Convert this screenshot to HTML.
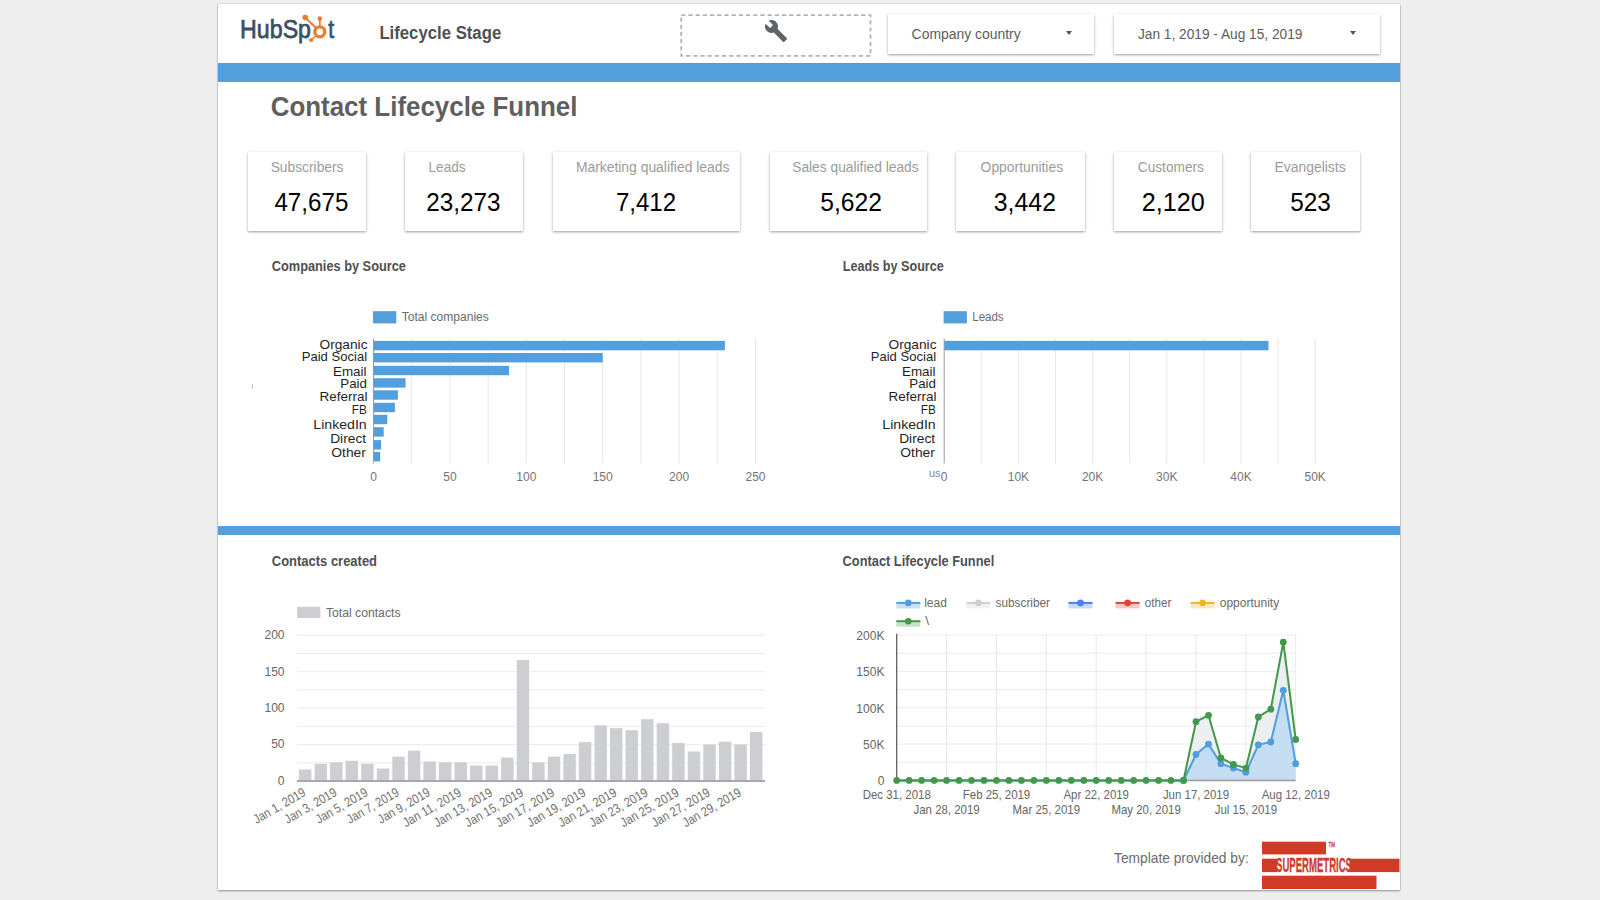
<!DOCTYPE html>
<html><head><meta charset="utf-8">
<style>
*{margin:0;padding:0;box-sizing:border-box}
html,body{width:1600px;height:900px;overflow:hidden;background:#eeeeee;font-family:"Liberation Sans",sans-serif}
.abs{position:absolute}
#card{position:absolute;left:218px;top:4px;width:1182px;height:886px;background:#fff;box-shadow:0 1px 2px rgba(0,0,0,.35),0 0 1px rgba(0,0,0,.3)}
.bar{position:absolute;left:218px;width:1182px;background:#539fdd}
.t{position:absolute;white-space:nowrap;line-height:1}
.kpi{position:absolute;top:152px;height:79px;background:#fff;box-shadow:0 1px 2px rgba(0,0,0,.32),0 1px 5px rgba(0,0,0,.09)}
.kl{position:absolute;top:8px;left:0;right:0;text-align:center;font-size:13.5px;color:#9a9a9a;white-space:nowrap}
.kv{position:absolute;top:37px;left:0;right:0;text-align:center;font-size:25px;color:#000;white-space:nowrap}
.dd{position:absolute;top:14px;height:40px;background:#fff;box-shadow:0 1px 2px rgba(0,0,0,.32),0 1px 5px rgba(0,0,0,.09)}
.dd span{position:absolute;top:12px;font-size:13.5px;color:#444}
.arr{position:absolute;top:17px;width:0;height:0;border-left:3.5px solid transparent;border-right:3.5px solid transparent;border-top:4px solid #555}
</style></head><body>
<div id="card"></div>
<div class="bar" style="top:63px;height:19px"></div>
<div class="bar" style="top:526px;height:9px"></div>

<svg class="abs" style="left:678px;top:12px" width="198" height="48"><rect x="3.2" y="3.1" width="189.3" height="40.8" fill="none" stroke="#b3b3b3" stroke-width="1.8" stroke-dasharray="4.2 3"/></svg>
<svg class="abs" style="left:764px;top:18.7px" width="24" height="24" viewBox="0 0 24 24"><path fill="#5f6368" d="M22.7 19l-9.1-9.1c.9-2.3.4-5-1.5-6.9-2-2-5-2.4-7.4-1.3L9 6 6 9 1.6 4.7C.4 7.1.9 10.1 2.9 12.1c1.9 1.9 4.6 2.4 6.9 1.5l9.1 9.1c.4.4 1 .4 1.4 0l2.3-2.3c.5-.4.5-1.1.1-1.4z"/></svg>
<div class="dd" style="left:888px;width:206px"><i class="arr" style="left:177.5px"></i></div>
<div class="dd" style="left:1114px;width:266px"><i class="arr" style="left:236px"></i></div>




<div class="kpi" style="left:248px;width:118px"></div>
<div class="kpi" style="left:405px;width:118px"></div>
<div class="kpi" style="left:553px;width:187px"></div>
<div class="kpi" style="left:770px;width:157px"></div>
<div class="kpi" style="left:956px;width:129px"></div>
<div class="kpi" style="left:1114px;width:108px"></div>
<div class="kpi" style="left:1251px;width:109px"></div>
<svg class="abs" style="left:0;top:0" width="1600" height="900" viewBox="0 0 1600 900" font-family='"Liberation Sans", sans-serif'>
<text id="hdr" x="379.39" y="38.6" font-size="17.5" fill="#505050" font-weight="bold" textLength="121.82" lengthAdjust="spacingAndGlyphs">Lifecycle Stage</text>
<text id="dd1" x="911.60" y="38.6" font-size="14" fill="#5c5c5c" textLength="109.11" lengthAdjust="spacingAndGlyphs">Company country</text>
<text id="dd2" x="1138.00" y="38.8" font-size="14" fill="#5c5c5c" textLength="164.41" lengthAdjust="spacingAndGlyphs">Jan 1, 2019 - Aug 15, 2019</text>
<text id="title" x="270.69" y="115.8" font-size="28" fill="#5f5f5f" font-weight="bold" textLength="306.73" lengthAdjust="spacingAndGlyphs">Contact Lifecycle Funnel</text>
<text id="kl0" x="270.68" y="172.3" font-size="14" fill="#9b9b9b" textLength="72.85" lengthAdjust="spacingAndGlyphs">Subscribers</text>
<text id="kl1" x="428.55" y="172.3" font-size="14" fill="#9b9b9b" textLength="36.99" lengthAdjust="spacingAndGlyphs">Leads</text>
<text id="kl2" x="575.89" y="172.3" font-size="14" fill="#9b9b9b" textLength="153.52" lengthAdjust="spacingAndGlyphs">Marketing qualified leads</text>
<text id="kl3" x="792.19" y="172.3" font-size="14" fill="#9b9b9b" textLength="126.42" lengthAdjust="spacingAndGlyphs">Sales qualified leads</text>
<text id="kl4" x="980.60" y="172.3" font-size="14" fill="#9b9b9b" textLength="82.52" lengthAdjust="spacingAndGlyphs">Opportunities</text>
<text id="kl5" x="1137.80" y="172.3" font-size="14" fill="#9b9b9b" textLength="66.12" lengthAdjust="spacingAndGlyphs">Customers</text>
<text id="kl6" x="1274.46" y="172.3" font-size="14" fill="#9b9b9b" textLength="71.18" lengthAdjust="spacingAndGlyphs">Evangelists</text>
<text id="kv0" x="274.38" y="211" font-size="25" fill="#000" textLength="73.95" lengthAdjust="spacingAndGlyphs">47,675</text>
<text id="kv1" x="426.18" y="211" font-size="25" fill="#000" textLength="74.32" lengthAdjust="spacingAndGlyphs">23,273</text>
<text id="kv2" x="615.88" y="211" font-size="25" fill="#000" textLength="60.16" lengthAdjust="spacingAndGlyphs">7,412</text>
<text id="kv3" x="820.28" y="211" font-size="25" fill="#000" textLength="61.64" lengthAdjust="spacingAndGlyphs">5,622</text>
<text id="kv4" x="993.80" y="211" font-size="25" fill="#000" textLength="62.14" lengthAdjust="spacingAndGlyphs">3,442</text>
<text id="kv5" x="1141.67" y="211" font-size="25" fill="#000" textLength="62.99" lengthAdjust="spacingAndGlyphs">2,120</text>
<text id="kv6" x="1290.26" y="211" font-size="25" fill="#000" textLength="40.67" lengthAdjust="spacingAndGlyphs">523</text>
<text id="ct1" x="271.80" y="271" font-size="14" fill="#4f4f4f" font-weight="bold" textLength="134.11" lengthAdjust="spacingAndGlyphs">Companies by Source</text>
<text id="ct2" x="842.80" y="271" font-size="14" fill="#4f4f4f" font-weight="bold" textLength="101.00" lengthAdjust="spacingAndGlyphs">Leads by Source</text>
<text id="ct3" x="271.80" y="566" font-size="14" fill="#4f4f4f" font-weight="bold" textLength="105.22" lengthAdjust="spacingAndGlyphs">Contacts created</text>
<text id="ct4" x="842.60" y="566.3" font-size="14" fill="#4f4f4f" font-weight="bold" textLength="151.61" lengthAdjust="spacingAndGlyphs">Contact Lifecycle Funnel</text>
<text id="foot" x="1114.00" y="862.5" font-size="14.5" fill="#6b6b6b" textLength="134.71" lengthAdjust="spacingAndGlyphs">Template provided by:</text>
<g>
<text id="hs1" x="240.12" y="38.2" font-size="26" fill="#3b4f63" textLength="70.91" lengthAdjust="spacingAndGlyphs" stroke="#3b4f63" stroke-width="0.75">HubSp</text>
<text id="hs2" x="328.30" y="38.2" font-size="26" fill="#3b4f63" textLength="5.93" lengthAdjust="spacingAndGlyphs" stroke="#3b4f63" stroke-width="0.75">t</text>
<circle cx="319.8" cy="31.8" r="5.0" fill="none" stroke="#ef7b2d" stroke-width="3.3"/>
<line x1="319.8" y1="25.8" x2="319.8" y2="18.8" stroke="#ef7b2d" stroke-width="1.8"/>
<circle cx="319.8" cy="18.6" r="2.3" fill="#ef7b2d"/>
<line x1="315.8" y1="27.8" x2="305.4" y2="17.7" stroke="#ef7b2d" stroke-width="1.9"/>
<circle cx="305.2" cy="17.5" r="2.8" fill="#ef7b2d"/>
<line x1="315.8" y1="35.8" x2="311.2" y2="40" stroke="#ef7b2d" stroke-width="1.4"/>
<circle cx="311.1" cy="40" r="2.1" fill="#ef7b2d"/>
</g>
<line x1="411.7" y1="338.5" x2="411.7" y2="463.5" stroke="#e6e6e6" stroke-width="1"/>
<line x1="449.9" y1="338.5" x2="449.9" y2="463.5" stroke="#e6e6e6" stroke-width="1"/>
<line x1="488.1" y1="338.5" x2="488.1" y2="463.5" stroke="#e6e6e6" stroke-width="1"/>
<line x1="526.3" y1="338.5" x2="526.3" y2="463.5" stroke="#e6e6e6" stroke-width="1"/>
<line x1="564.5" y1="338.5" x2="564.5" y2="463.5" stroke="#e6e6e6" stroke-width="1"/>
<line x1="602.7" y1="338.5" x2="602.7" y2="463.5" stroke="#e6e6e6" stroke-width="1"/>
<line x1="640.9" y1="338.5" x2="640.9" y2="463.5" stroke="#e6e6e6" stroke-width="1"/>
<line x1="679.1" y1="338.5" x2="679.1" y2="463.5" stroke="#e6e6e6" stroke-width="1"/>
<line x1="717.3" y1="338.5" x2="717.3" y2="463.5" stroke="#e6e6e6" stroke-width="1"/>
<line x1="755.5" y1="338.5" x2="755.5" y2="463.5" stroke="#e6e6e6" stroke-width="1"/>
<rect x="373.5" y="340.9" width="351.4" height="9.4" fill="#539fdd"/>
<rect x="373.5" y="353" width="229.2" height="9.4" fill="#539fdd"/>
<rect x="373.5" y="365.8" width="135.5" height="9.4" fill="#539fdd"/>
<rect x="373.5" y="378.2" width="32.1" height="9.4" fill="#539fdd"/>
<rect x="373.5" y="390.3" width="24.4" height="9.4" fill="#539fdd"/>
<rect x="373.5" y="402.8" width="21.4" height="9.4" fill="#539fdd"/>
<rect x="373.5" y="414.8" width="13.8" height="9.4" fill="#539fdd"/>
<rect x="373.5" y="427.2" width="10.2" height="9.4" fill="#539fdd"/>
<rect x="373.5" y="440.1" width="7.6" height="9.4" fill="#539fdd"/>
<rect x="373.5" y="452" width="6.7" height="9.4" fill="#539fdd"/>
<line x1="373.5" y1="338.5" x2="373.5" y2="463.5" stroke="#999" stroke-width="1"/>
<text x="373.5" y="480.5" font-size="12" fill="#757575" text-anchor="middle">0</text>
<text x="449.9" y="480.5" font-size="12" fill="#757575" text-anchor="middle">50</text>
<text x="526.3" y="480.5" font-size="12" fill="#757575" text-anchor="middle">100</text>
<text x="602.7" y="480.5" font-size="12" fill="#757575" text-anchor="middle">150</text>
<text x="679.1" y="480.5" font-size="12" fill="#757575" text-anchor="middle">200</text>
<text x="755.5" y="480.5" font-size="12" fill="#757575" text-anchor="middle">250</text>
<text id="b1lab0" x="319.50" y="348.7" font-size="13.2" fill="#1f1f1f" textLength="48.02" lengthAdjust="spacingAndGlyphs">Organic</text>
<text id="b1lab1" x="301.70" y="361.1" font-size="13.2" fill="#1f1f1f" textLength="65.42" lengthAdjust="spacingAndGlyphs">Paid Social</text>
<text id="b1lab2" x="332.97" y="375.9" font-size="13.2" fill="#1f1f1f" textLength="33.60" lengthAdjust="spacingAndGlyphs">Email</text>
<text id="b1lab3" x="340.24" y="387.9" font-size="13.2" fill="#1f1f1f" textLength="26.70" lengthAdjust="spacingAndGlyphs">Paid</text>
<text id="b1lab4" x="319.50" y="400.8" font-size="13.2" fill="#1f1f1f" textLength="48.02" lengthAdjust="spacingAndGlyphs">Referral</text>
<text id="b1lab5" x="351.79" y="413.7" font-size="13.2" fill="#1f1f1f" textLength="15.05" lengthAdjust="spacingAndGlyphs">FB</text>
<text id="b1lab6" x="313.38" y="429.2" font-size="13.2" fill="#1f1f1f" textLength="53.33" lengthAdjust="spacingAndGlyphs">LinkedIn</text>
<text id="b1lab7" x="330.18" y="442.8" font-size="13.2" fill="#1f1f1f" textLength="35.94" lengthAdjust="spacingAndGlyphs">Direct</text>
<text id="b1lab8" x="331.29" y="456.7" font-size="13.2" fill="#1f1f1f" textLength="34.63" lengthAdjust="spacingAndGlyphs">Other</text>
<rect x="373" y="311.2" width="23.3" height="12.2" fill="#539fdd"/>
<text id="b1leg" x="401.70" y="321.4" font-size="12" fill="#6a6a6a" textLength="87.12" lengthAdjust="spacingAndGlyphs">Total companies</text>
<line x1="981.3" y1="338.5" x2="981.3" y2="463.5" stroke="#e6e6e6" stroke-width="1"/>
<line x1="1018.4" y1="338.5" x2="1018.4" y2="463.5" stroke="#e6e6e6" stroke-width="1"/>
<line x1="1055.5" y1="338.5" x2="1055.5" y2="463.5" stroke="#e6e6e6" stroke-width="1"/>
<line x1="1092.6" y1="338.5" x2="1092.6" y2="463.5" stroke="#e6e6e6" stroke-width="1"/>
<line x1="1129.7" y1="338.5" x2="1129.7" y2="463.5" stroke="#e6e6e6" stroke-width="1"/>
<line x1="1166.8" y1="338.5" x2="1166.8" y2="463.5" stroke="#e6e6e6" stroke-width="1"/>
<line x1="1203.9" y1="338.5" x2="1203.9" y2="463.5" stroke="#e6e6e6" stroke-width="1"/>
<line x1="1241.0" y1="338.5" x2="1241.0" y2="463.5" stroke="#e6e6e6" stroke-width="1"/>
<line x1="1278.1" y1="338.5" x2="1278.1" y2="463.5" stroke="#e6e6e6" stroke-width="1"/>
<line x1="1315.2" y1="338.5" x2="1315.2" y2="463.5" stroke="#e6e6e6" stroke-width="1"/>
<rect x="944.2" y="340.9" width="324.3" height="9.4" fill="#539fdd"/>
<line x1="944.2" y1="338.5" x2="944.2" y2="463.5" stroke="#999" stroke-width="1"/>
<text x="944.2" y="480.5" font-size="12" fill="#757575" text-anchor="middle">0</text>
<text x="1018.4" y="480.5" font-size="12" fill="#757575" text-anchor="middle">10K</text>
<text x="1092.6" y="480.5" font-size="12" fill="#757575" text-anchor="middle">20K</text>
<text x="1166.8" y="480.5" font-size="12" fill="#757575" text-anchor="middle">30K</text>
<text x="1241.0" y="480.5" font-size="12" fill="#757575" text-anchor="middle">40K</text>
<text x="1315.2" y="480.5" font-size="12" fill="#757575" text-anchor="middle">50K</text>
<text id="b2lab0" x="888.50" y="348.7" font-size="13.2" fill="#1f1f1f" textLength="48.02" lengthAdjust="spacingAndGlyphs">Organic</text>
<text id="b2lab1" x="870.70" y="361.1" font-size="13.2" fill="#1f1f1f" textLength="65.42" lengthAdjust="spacingAndGlyphs">Paid Social</text>
<text id="b2lab2" x="901.97" y="375.9" font-size="13.2" fill="#1f1f1f" textLength="33.60" lengthAdjust="spacingAndGlyphs">Email</text>
<text id="b2lab3" x="909.24" y="387.9" font-size="13.2" fill="#1f1f1f" textLength="26.70" lengthAdjust="spacingAndGlyphs">Paid</text>
<text id="b2lab4" x="888.50" y="400.8" font-size="13.2" fill="#1f1f1f" textLength="48.02" lengthAdjust="spacingAndGlyphs">Referral</text>
<text id="b2lab5" x="920.79" y="413.7" font-size="13.2" fill="#1f1f1f" textLength="15.05" lengthAdjust="spacingAndGlyphs">FB</text>
<text id="b2lab6" x="882.38" y="429.2" font-size="13.2" fill="#1f1f1f" textLength="53.33" lengthAdjust="spacingAndGlyphs">LinkedIn</text>
<text id="b2lab7" x="899.18" y="442.8" font-size="13.2" fill="#1f1f1f" textLength="35.94" lengthAdjust="spacingAndGlyphs">Direct</text>
<text id="b2lab8" x="900.29" y="456.7" font-size="13.2" fill="#1f1f1f" textLength="34.63" lengthAdjust="spacingAndGlyphs">Other</text>
<rect x="943.6" y="311.2" width="23.3" height="12.2" fill="#539fdd"/>
<text id="b2leg" x="972.28" y="321.4" font-size="12" fill="#6a6a6a" textLength="31.34" lengthAdjust="spacingAndGlyphs">Leads</text>
<text x="929" y="477.3" font-size="11" fill="#888">us</text>
<rect x="252" y="384.5" width="1" height="4" fill="#bbb"/>
<line x1="297" y1="762.8" x2="765" y2="762.8" stroke="#ebebeb" stroke-width="1"/>
<line x1="297" y1="744.6" x2="765" y2="744.6" stroke="#ebebeb" stroke-width="1"/>
<line x1="297" y1="726.4" x2="765" y2="726.4" stroke="#ebebeb" stroke-width="1"/>
<line x1="297" y1="708.1" x2="765" y2="708.1" stroke="#ebebeb" stroke-width="1"/>
<line x1="297" y1="689.9" x2="765" y2="689.9" stroke="#ebebeb" stroke-width="1"/>
<line x1="297" y1="671.7" x2="765" y2="671.7" stroke="#ebebeb" stroke-width="1"/>
<line x1="297" y1="653.5" x2="765" y2="653.5" stroke="#ebebeb" stroke-width="1"/>
<line x1="297" y1="635.3" x2="765" y2="635.3" stroke="#ebebeb" stroke-width="1"/>
<text x="284.5" y="784.8" font-size="12" fill="#666" text-anchor="end">0</text>
<text x="284.5" y="748.4" font-size="12" fill="#666" text-anchor="end">50</text>
<text x="284.5" y="711.9" font-size="12" fill="#666" text-anchor="end">100</text>
<text x="284.5" y="675.5" font-size="12" fill="#666" text-anchor="end">150</text>
<text x="284.5" y="639.1" font-size="12" fill="#666" text-anchor="end">200</text>
<rect x="299.0" y="769.4" width="12.4" height="11.6" fill="#ccced2"/>
<rect x="314.6" y="763.7" width="12.4" height="17.3" fill="#ccced2"/>
<rect x="330.1" y="762.3" width="12.4" height="18.7" fill="#ccced2"/>
<rect x="345.6" y="760.8" width="12.4" height="20.2" fill="#ccced2"/>
<rect x="361.2" y="763.7" width="12.4" height="17.3" fill="#ccced2"/>
<rect x="376.8" y="768.5" width="12.4" height="12.5" fill="#ccced2"/>
<rect x="392.3" y="756.7" width="12.4" height="24.3" fill="#ccced2"/>
<rect x="407.9" y="750.7" width="12.4" height="30.3" fill="#ccced2"/>
<rect x="423.4" y="761.5" width="12.4" height="19.5" fill="#ccced2"/>
<rect x="439.0" y="762.3" width="12.4" height="18.7" fill="#ccced2"/>
<rect x="454.5" y="762.3" width="12.4" height="18.7" fill="#ccced2"/>
<rect x="470.1" y="765.6" width="12.4" height="15.4" fill="#ccced2"/>
<rect x="485.6" y="765.6" width="12.4" height="15.4" fill="#ccced2"/>
<rect x="501.1" y="757.6" width="12.4" height="23.4" fill="#ccced2"/>
<rect x="516.7" y="660.1" width="12.4" height="120.9" fill="#ccced2"/>
<rect x="532.2" y="762.4" width="12.4" height="18.6" fill="#ccced2"/>
<rect x="547.8" y="756.6" width="12.4" height="24.4" fill="#ccced2"/>
<rect x="563.4" y="753.9" width="12.4" height="27.1" fill="#ccced2"/>
<rect x="578.9" y="742.1" width="12.4" height="38.9" fill="#ccced2"/>
<rect x="594.5" y="725.3" width="12.4" height="55.7" fill="#ccced2"/>
<rect x="610.0" y="728.2" width="12.4" height="52.8" fill="#ccced2"/>
<rect x="625.5" y="730.2" width="12.4" height="50.8" fill="#ccced2"/>
<rect x="641.1" y="719.2" width="12.4" height="61.8" fill="#ccced2"/>
<rect x="656.7" y="723.2" width="12.4" height="57.8" fill="#ccced2"/>
<rect x="672.2" y="742.9" width="12.4" height="38.1" fill="#ccced2"/>
<rect x="687.8" y="751.5" width="12.4" height="29.5" fill="#ccced2"/>
<rect x="703.3" y="744.6" width="12.4" height="36.4" fill="#ccced2"/>
<rect x="718.9" y="741.7" width="12.4" height="39.3" fill="#ccced2"/>
<rect x="734.4" y="744.6" width="12.4" height="36.4" fill="#ccced2"/>
<rect x="750.0" y="732.0" width="12.4" height="49.0" fill="#ccced2"/>
<line x1="297" y1="781.0" x2="765" y2="781.0" stroke="#a8a8a8" stroke-width="2"/>
<text transform="translate(306.7,795) rotate(-30)" font-size="13" fill="#707070" text-anchor="end" textLength="58" lengthAdjust="spacingAndGlyphs">Jan 1, 2019</text>
<text transform="translate(337.8,795) rotate(-30)" font-size="13" fill="#707070" text-anchor="end" textLength="58" lengthAdjust="spacingAndGlyphs">Jan 3, 2019</text>
<text transform="translate(368.9,795) rotate(-30)" font-size="13" fill="#707070" text-anchor="end" textLength="58" lengthAdjust="spacingAndGlyphs">Jan 5, 2019</text>
<text transform="translate(400.0,795) rotate(-30)" font-size="13" fill="#707070" text-anchor="end" textLength="58" lengthAdjust="spacingAndGlyphs">Jan 7, 2019</text>
<text transform="translate(431.1,795) rotate(-30)" font-size="13" fill="#707070" text-anchor="end" textLength="58" lengthAdjust="spacingAndGlyphs">Jan 9, 2019</text>
<text transform="translate(462.2,795) rotate(-30)" font-size="13" fill="#707070" text-anchor="end" textLength="65" lengthAdjust="spacingAndGlyphs">Jan 11, 2019</text>
<text transform="translate(493.3,795) rotate(-30)" font-size="13" fill="#707070" text-anchor="end" textLength="65" lengthAdjust="spacingAndGlyphs">Jan 13, 2019</text>
<text transform="translate(524.4,795) rotate(-30)" font-size="13" fill="#707070" text-anchor="end" textLength="65" lengthAdjust="spacingAndGlyphs">Jan 15, 2019</text>
<text transform="translate(555.5,795) rotate(-30)" font-size="13" fill="#707070" text-anchor="end" textLength="65" lengthAdjust="spacingAndGlyphs">Jan 17, 2019</text>
<text transform="translate(586.6,795) rotate(-30)" font-size="13" fill="#707070" text-anchor="end" textLength="65" lengthAdjust="spacingAndGlyphs">Jan 19, 2019</text>
<text transform="translate(617.7,795) rotate(-30)" font-size="13" fill="#707070" text-anchor="end" textLength="65" lengthAdjust="spacingAndGlyphs">Jan 21, 2019</text>
<text transform="translate(648.8,795) rotate(-30)" font-size="13" fill="#707070" text-anchor="end" textLength="65" lengthAdjust="spacingAndGlyphs">Jan 23, 2019</text>
<text transform="translate(679.9,795) rotate(-30)" font-size="13" fill="#707070" text-anchor="end" textLength="65" lengthAdjust="spacingAndGlyphs">Jan 25, 2019</text>
<text transform="translate(711.0,795) rotate(-30)" font-size="13" fill="#707070" text-anchor="end" textLength="65" lengthAdjust="spacingAndGlyphs">Jan 27, 2019</text>
<text transform="translate(742.1,795) rotate(-30)" font-size="13" fill="#707070" text-anchor="end" textLength="65" lengthAdjust="spacingAndGlyphs">Jan 29, 2019</text>
<rect x="297.1" y="606.75" width="23.3" height="11.3" fill="#ccced2"/>
<text id="ccleg" x="325.90" y="616.5" font-size="12" fill="#6a6a6a" textLength="74.61" lengthAdjust="spacingAndGlyphs">Total contacts</text>
<line x1="896.7" y1="762.2" x2="1295.7" y2="762.2" stroke="#ebebeb" stroke-width="1"/>
<line x1="896.7" y1="744.1" x2="1295.7" y2="744.1" stroke="#ebebeb" stroke-width="1"/>
<line x1="896.7" y1="725.9" x2="1295.7" y2="725.9" stroke="#ebebeb" stroke-width="1"/>
<line x1="896.7" y1="707.8" x2="1295.7" y2="707.8" stroke="#ebebeb" stroke-width="1"/>
<line x1="896.7" y1="689.6" x2="1295.7" y2="689.6" stroke="#ebebeb" stroke-width="1"/>
<line x1="896.7" y1="671.4" x2="1295.7" y2="671.4" stroke="#ebebeb" stroke-width="1"/>
<line x1="896.7" y1="653.3" x2="1295.7" y2="653.3" stroke="#ebebeb" stroke-width="1"/>
<line x1="896.7" y1="635.1" x2="1295.7" y2="635.1" stroke="#ebebeb" stroke-width="1"/>
<line x1="946.6" y1="633.8" x2="946.6" y2="780.4" stroke="#e8e8e8" stroke-width="1"/>
<line x1="996.5" y1="633.8" x2="996.5" y2="780.4" stroke="#e8e8e8" stroke-width="1"/>
<line x1="1046.3" y1="633.8" x2="1046.3" y2="780.4" stroke="#e8e8e8" stroke-width="1"/>
<line x1="1096.2" y1="633.8" x2="1096.2" y2="780.4" stroke="#e8e8e8" stroke-width="1"/>
<line x1="1146.1" y1="633.8" x2="1146.1" y2="780.4" stroke="#e8e8e8" stroke-width="1"/>
<line x1="1196.0" y1="633.8" x2="1196.0" y2="780.4" stroke="#e8e8e8" stroke-width="1"/>
<line x1="1245.9" y1="633.8" x2="1245.9" y2="780.4" stroke="#e8e8e8" stroke-width="1"/>
<line x1="1295.7" y1="633.8" x2="1295.7" y2="780.4" stroke="#e8e8e8" stroke-width="1"/>
<text x="884.4" y="785.2" font-size="12" fill="#666" text-anchor="end">0</text>
<text x="884.4" y="748.9" font-size="12" fill="#666" text-anchor="end">50K</text>
<text x="884.4" y="712.6" font-size="12" fill="#666" text-anchor="end">100K</text>
<text x="884.4" y="676.2" font-size="12" fill="#666" text-anchor="end">150K</text>
<text x="884.4" y="639.9" font-size="12" fill="#666" text-anchor="end">200K</text>
<polygon points="896.7,780.4 909.2,780.4 921.6,780.4 934.1,780.4 946.6,780.4 959.1,780.4 971.5,780.4 984.0,780.4 996.5,780.4 1008.9,780.4 1021.4,780.4 1033.9,780.4 1046.3,780.4 1058.8,780.4 1071.3,780.4 1083.8,780.4 1096.2,780.4 1108.7,780.4 1121.2,780.4 1133.6,780.4 1146.1,780.4 1158.6,780.4 1171.0,780.4 1183.5,780.4 1196.0,721.7 1208.5,715.3 1220.9,758.0 1233.4,764.4 1245.9,768.1 1258.3,717.0 1270.8,709.2 1283.3,642.2 1295.7,739.5 1295.7,763.7 1283.3,690.3 1270.8,742.0 1258.3,744.8 1245.9,772.3 1233.4,768.1 1220.9,763.7 1208.5,744.1 1196.0,754.5 1183.5,780.4 1171.0,780.4 1158.6,780.4 1146.1,780.4 1133.6,780.4 1121.2,780.4 1108.7,780.4 1096.2,780.4 1083.8,780.4 1071.3,780.4 1058.8,780.4 1046.3,780.4 1033.9,780.4 1021.4,780.4 1008.9,780.4 996.5,780.4 984.0,780.4 971.5,780.4 959.1,780.4 946.6,780.4 934.1,780.4 921.6,780.4 909.2,780.4 896.7,780.4" fill="#eceef0"/>
<polygon points="896.7,780.4 909.2,780.4 921.6,780.4 934.1,780.4 946.6,780.4 959.1,780.4 971.5,780.4 984.0,780.4 996.5,780.4 1008.9,780.4 1021.4,780.4 1033.9,780.4 1046.3,780.4 1058.8,780.4 1071.3,780.4 1083.8,780.4 1096.2,780.4 1108.7,780.4 1121.2,780.4 1133.6,780.4 1146.1,780.4 1158.6,780.4 1171.0,780.4 1183.5,780.4 1196.0,754.5 1208.5,744.1 1220.9,763.7 1233.4,768.1 1245.9,772.3 1258.3,744.8 1270.8,742.0 1283.3,690.3 1295.7,763.7 1295.7,780.4 896.7,780.4" fill="#c4ddf3"/>
<line x1="896.7" y1="633.8" x2="896.7" y2="780.4" stroke="#555" stroke-width="1.2"/>
<line x1="896.7" y1="780.4" x2="1295.7" y2="780.4" stroke="#9a9a9a" stroke-width="1.5"/>
<polyline points="896.7,780.4 909.2,780.4 921.6,780.4 934.1,780.4 946.6,780.4 959.1,780.4 971.5,780.4 984.0,780.4 996.5,780.4 1008.9,780.4 1021.4,780.4 1033.9,780.4 1046.3,780.4 1058.8,780.4 1071.3,780.4 1083.8,780.4 1096.2,780.4 1108.7,780.4 1121.2,780.4 1133.6,780.4 1146.1,780.4 1158.6,780.4 1171.0,780.4 1183.5,780.4 1196.0,754.5 1208.5,744.1 1220.9,763.7 1233.4,768.1 1245.9,772.3 1258.3,744.8 1270.8,742.0 1283.3,690.3 1295.7,763.7" fill="none" stroke="#4d9de0" stroke-width="2"/>
<circle cx="1183.5" cy="780.4" r="3.4" fill="#4d9de0"/>
<circle cx="1196.0" cy="754.5" r="3.4" fill="#4d9de0"/>
<circle cx="1208.5" cy="744.1" r="3.4" fill="#4d9de0"/>
<circle cx="1220.9" cy="763.7" r="3.4" fill="#4d9de0"/>
<circle cx="1233.4" cy="768.1" r="3.4" fill="#4d9de0"/>
<circle cx="1245.9" cy="772.3" r="3.4" fill="#4d9de0"/>
<circle cx="1258.3" cy="744.8" r="3.4" fill="#4d9de0"/>
<circle cx="1270.8" cy="742.0" r="3.4" fill="#4d9de0"/>
<circle cx="1283.3" cy="690.3" r="3.4" fill="#4d9de0"/>
<circle cx="1295.7" cy="763.7" r="3.4" fill="#4d9de0"/>
<polyline points="896.7,780.4 909.2,780.4 921.6,780.4 934.1,780.4 946.6,780.4 959.1,780.4 971.5,780.4 984.0,780.4 996.5,780.4 1008.9,780.4 1021.4,780.4 1033.9,780.4 1046.3,780.4 1058.8,780.4 1071.3,780.4 1083.8,780.4 1096.2,780.4 1108.7,780.4 1121.2,780.4 1133.6,780.4 1146.1,780.4 1158.6,780.4 1171.0,780.4 1183.5,780.4 1196.0,721.7 1208.5,715.3 1220.9,758.0 1233.4,764.4 1245.9,768.1 1258.3,717.0 1270.8,709.2 1283.3,642.2 1295.7,739.5" fill="none" stroke="#43984b" stroke-width="2"/>
<circle cx="896.7" cy="780.4" r="3.4" fill="#43984b"/>
<circle cx="909.2" cy="780.4" r="3.4" fill="#43984b"/>
<circle cx="921.6" cy="780.4" r="3.4" fill="#43984b"/>
<circle cx="934.1" cy="780.4" r="3.4" fill="#43984b"/>
<circle cx="946.6" cy="780.4" r="3.4" fill="#43984b"/>
<circle cx="959.1" cy="780.4" r="3.4" fill="#43984b"/>
<circle cx="971.5" cy="780.4" r="3.4" fill="#43984b"/>
<circle cx="984.0" cy="780.4" r="3.4" fill="#43984b"/>
<circle cx="996.5" cy="780.4" r="3.4" fill="#43984b"/>
<circle cx="1008.9" cy="780.4" r="3.4" fill="#43984b"/>
<circle cx="1021.4" cy="780.4" r="3.4" fill="#43984b"/>
<circle cx="1033.9" cy="780.4" r="3.4" fill="#43984b"/>
<circle cx="1046.3" cy="780.4" r="3.4" fill="#43984b"/>
<circle cx="1058.8" cy="780.4" r="3.4" fill="#43984b"/>
<circle cx="1071.3" cy="780.4" r="3.4" fill="#43984b"/>
<circle cx="1083.8" cy="780.4" r="3.4" fill="#43984b"/>
<circle cx="1096.2" cy="780.4" r="3.4" fill="#43984b"/>
<circle cx="1108.7" cy="780.4" r="3.4" fill="#43984b"/>
<circle cx="1121.2" cy="780.4" r="3.4" fill="#43984b"/>
<circle cx="1133.6" cy="780.4" r="3.4" fill="#43984b"/>
<circle cx="1146.1" cy="780.4" r="3.4" fill="#43984b"/>
<circle cx="1158.6" cy="780.4" r="3.4" fill="#43984b"/>
<circle cx="1171.0" cy="780.4" r="3.4" fill="#43984b"/>
<circle cx="1183.5" cy="780.4" r="3.4" fill="#43984b"/>
<circle cx="1196.0" cy="721.7" r="3.4" fill="#43984b"/>
<circle cx="1208.5" cy="715.3" r="3.4" fill="#43984b"/>
<circle cx="1220.9" cy="758.0" r="3.4" fill="#43984b"/>
<circle cx="1233.4" cy="764.4" r="3.4" fill="#43984b"/>
<circle cx="1245.9" cy="768.1" r="3.4" fill="#43984b"/>
<circle cx="1258.3" cy="717.0" r="3.4" fill="#43984b"/>
<circle cx="1270.8" cy="709.2" r="3.4" fill="#43984b"/>
<circle cx="1283.3" cy="642.2" r="3.4" fill="#43984b"/>
<circle cx="1295.7" cy="739.5" r="3.4" fill="#43984b"/>
<text transform="translate(896.7,798.9) scale(0.955,1)" font-size="12" fill="#666" text-anchor="middle">Dec 31, 2018</text>
<text transform="translate(996.5,798.9) scale(0.955,1)" font-size="12" fill="#666" text-anchor="middle">Feb 25, 2019</text>
<text transform="translate(1096.2,798.9) scale(0.955,1)" font-size="12" fill="#666" text-anchor="middle">Apr 22, 2019</text>
<text transform="translate(1196.0,798.9) scale(0.955,1)" font-size="12" fill="#666" text-anchor="middle">Jun 17, 2019</text>
<text transform="translate(1295.7,798.9) scale(0.955,1)" font-size="12" fill="#666" text-anchor="middle">Aug 12, 2019</text>
<text transform="translate(946.6,814) scale(0.955,1)" font-size="12" fill="#666" text-anchor="middle">Jan 28, 2019</text>
<text transform="translate(1046.3,814) scale(0.955,1)" font-size="12" fill="#666" text-anchor="middle">Mar 25, 2019</text>
<text transform="translate(1146.1,814) scale(0.955,1)" font-size="12" fill="#666" text-anchor="middle">May 20, 2019</text>
<text transform="translate(1245.9,814) scale(0.955,1)" font-size="12" fill="#666" text-anchor="middle">Jul 15, 2019</text>
<rect x="896.3" y="602.9" width="24" height="5.5" fill="#4d9de0" opacity="0.3"/>
<line x1="896.3" y1="602.9" x2="920.3" y2="602.9" stroke="#4d9de0" stroke-width="2"/>
<circle cx="908.3" cy="602.9" r="3.3" fill="#4d9de0"/>
<text id="lg1" x="924.13" y="607.0" font-size="12" fill="#6a6a6a" textLength="22.73" lengthAdjust="spacingAndGlyphs">lead</text>
<rect x="966.4" y="602.9" width="24" height="5.5" fill="#ccd0d5" opacity="0.3"/>
<line x1="966.4" y1="602.9" x2="990.4" y2="602.9" stroke="#ccd0d5" stroke-width="2"/>
<circle cx="978.4" cy="602.9" r="3.3" fill="#ccd0d5"/>
<text id="lg2" x="995.60" y="607.0" font-size="12" fill="#6a6a6a" textLength="54.42" lengthAdjust="spacingAndGlyphs">subscriber</text>
<rect x="1068.5" y="602.9" width="24" height="5.5" fill="#4a7ff0" opacity="0.3"/>
<line x1="1068.5" y1="602.9" x2="1092.5" y2="602.9" stroke="#4a7ff0" stroke-width="2"/>
<circle cx="1080.5" cy="602.9" r="3.3" fill="#4a7ff0"/>
<rect x="1115.6" y="602.9" width="24" height="5.5" fill="#d44a3a" opacity="0.3"/>
<line x1="1115.6" y1="602.9" x2="1139.6" y2="602.9" stroke="#d44a3a" stroke-width="2"/>
<circle cx="1127.6" cy="602.9" r="3.3" fill="#d44a3a"/>
<text id="lg3" x="1144.75" y="607.0" font-size="12" fill="#6a6a6a" textLength="26.56" lengthAdjust="spacingAndGlyphs">other</text>
<rect x="1190.6" y="602.9" width="24" height="5.5" fill="#f0b429" opacity="0.3"/>
<line x1="1190.6" y1="602.9" x2="1214.6" y2="602.9" stroke="#f0b429" stroke-width="2"/>
<circle cx="1202.6" cy="602.9" r="3.3" fill="#f0b429"/>
<text id="lg4" x="1219.75" y="607.0" font-size="12" fill="#6a6a6a" textLength="59.47" lengthAdjust="spacingAndGlyphs">opportunity</text>
<rect x="896.3" y="621.2" width="24" height="5.5" fill="#43984b" opacity="0.3"/>
<line x1="896.3" y1="621.2" x2="920.3" y2="621.2" stroke="#43984b" stroke-width="2"/>
<circle cx="908.3" cy="621.2" r="3.3" fill="#43984b"/>
<text id="lg5" x="925.20" y="625.3" font-size="12" fill="#6a6a6a" textLength="3.84" lengthAdjust="spacingAndGlyphs">\</text>
<rect x="1262" y="841.7" width="64" height="12.7" fill="#d13a27"/>
<text x="1328.6" y="847" font-size="6.5" fill="#d13a27" textLength="6.4" lengthAdjust="spacingAndGlyphs" stroke="#d13a27" stroke-width="0.3">TM</text>
<rect x="1262" y="858.7" width="15" height="13.4" fill="#d13a27"/>
<rect x="1349.5" y="858.7" width="50" height="13.4" fill="#d13a27"/>
<rect x="1262" y="875.7" width="114.5" height="13.3" fill="#d13a27"/>
<text x="1276" y="872.3" font-size="20.5" font-weight="bold" fill="#d13a27" stroke="#d13a27" stroke-width="0.35" textLength="76" lengthAdjust="spacingAndGlyphs">SUPERMETRICS</text>
</svg>
</body></html>
